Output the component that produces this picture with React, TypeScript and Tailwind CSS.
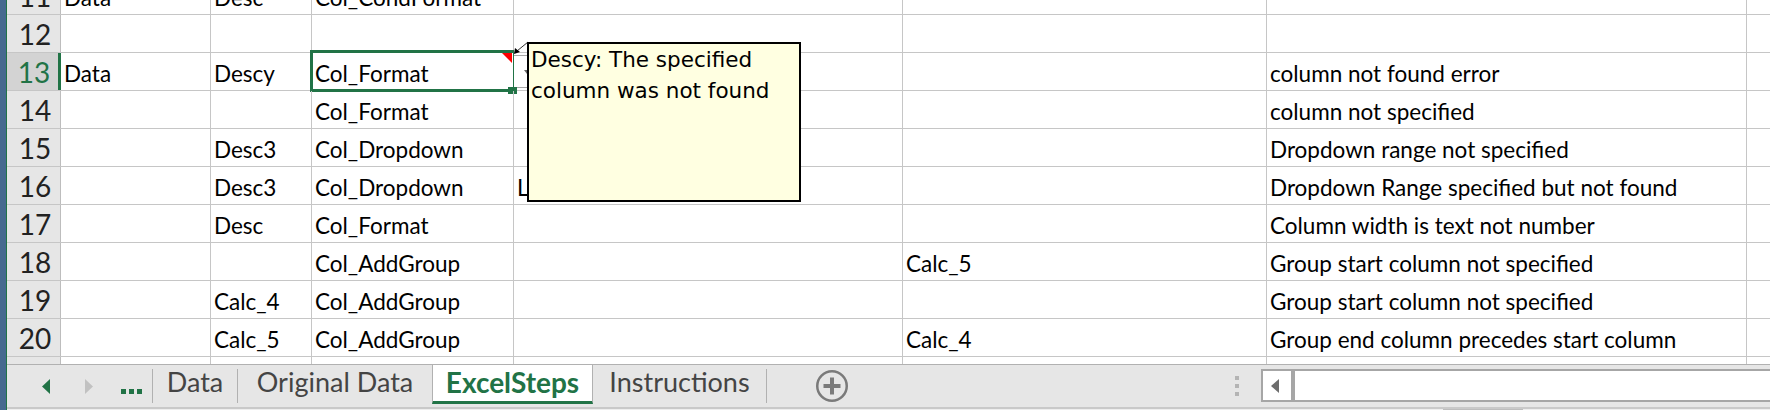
import React from 'react';

const COLS = ['w-[150px]', 'w-[101px]', 'w-[202px]', 'w-[389px]', 'w-[364px]', 'w-[480px]', 'w-[300px]'];

type Row = { n: number; c: string[] };

const ROWS: Row[] = [
  { n: 11, c: ['Data', 'Desc', 'Col_CondFormat', '', '', '', ''] },
  { n: 12, c: ['', '', '', '', '', '', ''] },
  { n: 13, c: ['Data', 'Descy', 'Col_Format', '', '', 'column not found error', ''] },
  { n: 14, c: ['', '', 'Col_Format', '', '', 'column not specified', ''] },
  { n: 15, c: ['', 'Desc3', 'Col_Dropdown', '', '', 'Dropdown range not specified', ''] },
  { n: 16, c: ['', 'Desc3', 'Col_Dropdown', 'List', '', 'Dropdown Range specified but not found', ''] },
  { n: 17, c: ['', 'Desc', 'Col_Format', '', '', 'Column width is text not number', ''] },
  { n: 18, c: ['', '', 'Col_AddGroup', '', 'Calc_5', 'Group start column not specified', ''] },
  { n: 19, c: ['', 'Calc_4', 'Col_AddGroup', '', '', 'Group start column not specified', ''] },
  { n: 20, c: ['', 'Calc_5', 'Col_AddGroup', '', 'Calc_4', 'Group end column precedes start column', ''] },
  { n: 21, c: ['', '', '', '', '', '', ''] },
];

// active cell decorations (C13)
const ActiveCell: React.FC = () => (
  <>
    {/* data validation dropdown button, mostly under the comment */}
    <div className="absolute left-[201px] top-[2px] h-[33px] w-[16px] border border-[#a6a6a6] bg-white">
      <svg className="absolute left-[10px] top-[14px]" width="6" height="4" viewBox="0 0 6 4">
        <polygon points="0,0 6,0 3,4" fill="#666" />
      </svg>
    </div>
    {/* selection outline */}
    <div className="absolute left-[-2px] top-[-3px] h-[42px] w-[204px] border-y-[3px] border-l-[3px] border-r border-[#217346]" />
    {/* fill handle */}
    <div className="absolute left-[196px] top-[34px] h-[7px] w-[9px] bg-[#217346]" />
    {/* comment indicator */}
    <svg className="absolute left-[190px] top-0" width="10" height="10" viewBox="0 0 10 10">
      <polygon points="0,0 10,0 10,10" fill="#ff0000" />
    </svg>
  </>
);

const GridRow: React.FC<{ row: Row }> = ({ row }) => {
  const active = row.n === 13;
  return (
    <div className="flex h-[38px] shrink-0 border-b border-[#c6c6c6]">
      <div
        className={
          active
            ? "w-[54px] shrink-0 border-r-[3px] border-[#217346] bg-[#d3d3d3] pt-[2px] pl-[3px] text-center text-[28px] leading-[34px] text-[#217346] [font-family:'Lato',sans-serif]"
            : "w-[54px] shrink-0 border-r border-[#bdbdbd] bg-[#e6e6e6] pt-[2px] pl-[3px] text-center text-[28px] leading-[34px] text-[#222] [font-family:'Lato',sans-serif]"
        }
      >
        {row.n}
      </div>
      {row.c.map((t, i) => (
        <div
          key={i}
          className={`relative ${COLS[i]} shrink-0 whitespace-nowrap border-r border-[#c6c6c6] pl-[3px] pt-[7px] text-[22.5px] leading-[27px] text-black [font-family:'Lato',sans-serif]`}
        >
          {t}
          {active && i === 2 && <ActiveCell />}
        </div>
      ))}
    </div>
  );
};

const Tab: React.FC<{ w: string; label: string }> = ({ w, label }) => (
  <div className={`${w} flex shrink-0 justify-center pt-[1px] text-[27px] leading-[32px] text-[#444] [font-family:'Lato',sans-serif]`}>
    {label}
  </div>
);

const Sep: React.FC = () => <div className="h-[34px] w-px shrink-0 self-center bg-[#b1b1b1]" />;

const App: React.FC = () => {
  return (
    <div className="flex h-[410px] w-[1770px] overflow-hidden bg-white">
      {/* desktop edge + window border */}
      <div className="w-[6px] shrink-0 bg-[#46698f]" />
      <div className="w-px shrink-0 bg-[#217346]" />

      <div className="flex min-w-0 flex-1 flex-col">
        {/* Sheet grid */}
        <div className="relative h-[364px] shrink-0 overflow-hidden">
          <div className="mt-[-23px] flex flex-col">
            {ROWS.map((r) => (
              <GridRow key={r.n} row={r} />
            ))}
          </div>

          {/* comment connector */}
          <svg className="absolute left-[503px] top-[40px] z-10" width="20" height="16" viewBox="0 0 20 16">
            <line x1="18" y1="2" x2="7" y2="11" stroke="#333" strokeWidth="1" />
            <polygon points="4,14 5,8 10,12" fill="#000" />
          </svg>

          {/* comment box */}
          <div className="absolute left-[520px] top-[42px] z-20 h-[160px] w-[274px] border-2 border-black bg-[#ffffe1] pl-[2px] text-[21.5px] leading-[31px] text-black [font-family:'DejaVu_Sans',sans-serif]">
            Descy: The specified column was not found
          </div>
        </div>

        {/* Sheet tabs */}
        <div className="flex h-[43px] shrink-0 border-t border-[#b1b1b1] bg-[#e6e6e6]">
          <svg className="ml-[35px] shrink-0 self-center" width="8" height="15" viewBox="0 0 8 15">
            <polygon points="8,0 8,15 0,7.5" fill="#217346" />
          </svg>
          <svg className="ml-[35px] shrink-0 self-center" width="8" height="15" viewBox="0 0 8 15">
            <polygon points="0,0 0,15 8,7.5" fill="#c1c1c1" />
          </svg>
          <div className="ml-[28px] mt-[24px] flex shrink-0 gap-[3px] self-start">
            <div className="h-[5px] w-[5px] bg-[#217346]" />
            <div className="h-[5px] w-[5px] bg-[#217346]" />
            <div className="h-[5px] w-[5px] bg-[#217346]" />
          </div>
          <div className="ml-[10px] flex shrink-0">
            <Sep />
            <Tab w="w-[84px]" label="Data" />
            <Sep />
            <Tab w="w-[194px]" label="Original Data" />
            <div className="flex h-[39px] w-[161px] shrink-0 justify-center border-x border-b-[3px] border-x-[#b1b1b1] border-b-[#217346] bg-white pt-[1px] text-[28px] font-bold leading-[32px] text-[#217346] [font-family:'Lato',sans-serif]">
              ExcelSteps
            </div>
            <Tab w="w-[173px]" label="Instructions" />
            <Sep />
          </div>
          <svg className="ml-[49px] shrink-0 self-center" width="32" height="32" viewBox="0 0 32 32">
            <circle cx="16" cy="16" r="14.75" fill="none" stroke="#7a7a7a" strokeWidth="2.5" />
            <line x1="7.5" y1="16" x2="24.5" y2="16" stroke="#7a7a7a" strokeWidth="4" />
            <line x1="16" y1="7.5" x2="16" y2="24.5" stroke="#7a7a7a" strokeWidth="4" />
          </svg>

          <div className="flex-1" />

          <div className="flex shrink-0 flex-col gap-[4px] self-center">
            <div className="h-[4px] w-[4px] bg-[#b4b4b4]" />
            <div className="h-[4px] w-[4px] bg-[#b4b4b4]" />
            <div className="h-[4px] w-[4px] bg-[#b4b4b4]" />
          </div>

          {/* horizontal scrollbar */}
          <div className="ml-[22px] mt-[4px] flex h-[33px] w-[509px] shrink-0 self-start border-y-2 border-l-2 border-[#a6a6a6] bg-white">
            <div className="flex w-[28px] shrink-0 items-center pl-[8px]">
              <svg width="8" height="14" viewBox="0 0 8 14">
                <polygon points="8,0 8,14 0,7" fill="#6d6d6d" />
              </svg>
            </div>
            <div className="w-[4px] shrink-0 bg-[#a6a6a6]" />
          </div>
        </div>

        {/* bottom edge */}
        <div className="flex h-[3px] shrink-0 flex-col">
          <div className="h-[2px] bg-[#c9c9c9]" />
          <div className="flex h-px bg-[#eeeeee]">
            <div className="ml-[1436px] w-[80px] bg-[#bdbdbd]" />
          </div>
        </div>
      </div>
    </div>
  );
};

export default App;
